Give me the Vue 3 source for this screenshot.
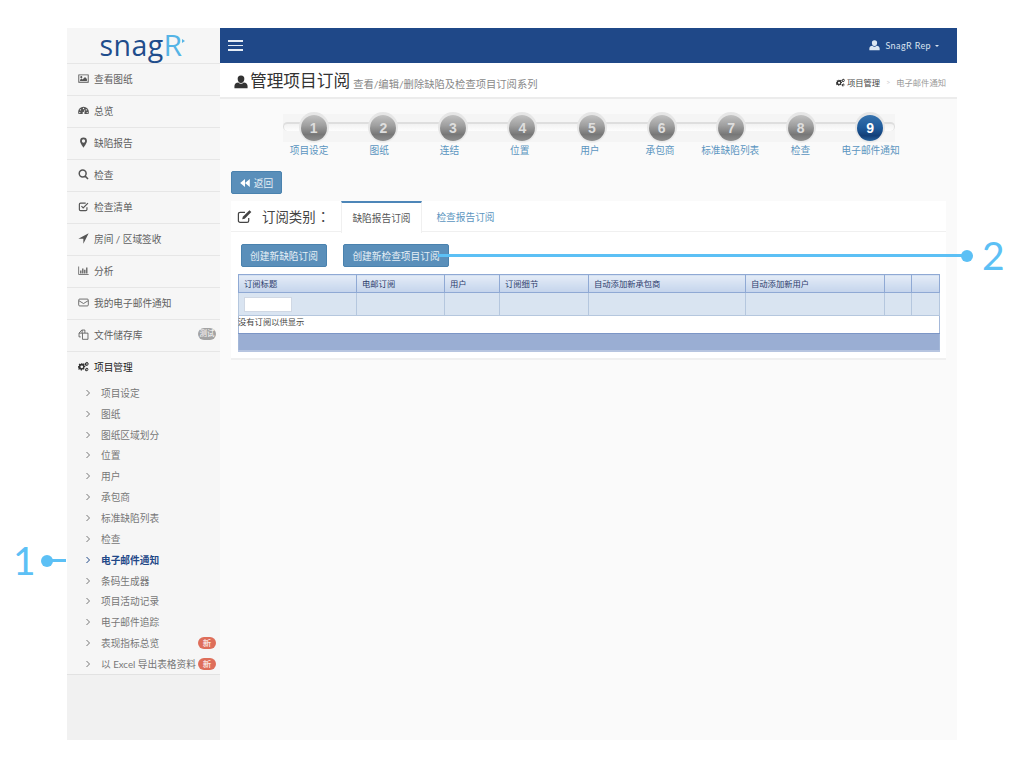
<script setup>
const icons = {
  picture: { f: 'M.5 2h15v12H.5zM1.800 3.300v9.400h12.400V3.300zM4.800 4.500a1.500 1.500 0 1 1 0 3 1.500 1.500 0 0 1 0-3zM3 11.500V9.800l2-1.800 1.600 1.300 3.600-3.600 2.800 3v2.800z' },
  gauge: { f: 'M8 2.500a7.800 7.800 0 0 0-7.800 7.800c0 1.100.2 2.100.6 2.900h14.400c.4-.8.600-1.800.6-2.900A7.800 7.800 0 0 0 8 2.500zM8 4a1 1 0 1 1 0 2 1 1 0 0 1 0-2zM3.600 6a1 1 0 1 1 0 2 1 1 0 0 1 0-2zM12.400 6a1 1 0 1 1 0 2 1 1 0 0 1 0-2zM2.600 10a1 1 0 1 1 0 2 1 1 0 0 1 0-2zM13.400 10a1 1 0 1 1 0 2 1 1 0 0 1 0-2zM10 6.500l.9.400-1.700 3.600a1.500 1.500 0 1 1-.9-.4z' },
  pin: { f: 'M8 .8a5 5 0 0 0-5 5c0 3.200 5 9.600 5 9.600s5-6.400 5-9.600a5 5 0 0 0-5-5zM8 3.400a2.400 2.400 0 1 1 0 4.800 2.400 2.400 0 0 1 0-4.800z' },
  search: { s: 'M6.800 1.500a5 5 0 1 0 0 10 5 5 0 0 0 0-10zM10.400 10.400l4.200 4.200', w: 2.200 },
  check: { s: 'M13 9v3.200a1.800 1.800 0 0 1-1.800 1.800H3.800A1.800 1.800 0 0 1 2 12.200V4.800A1.800 1.800 0 0 1 3.800 3h7.400M5 7.500l2.500 2.500L14.500 3', w: 1.700 },
  arrow: { f: 'M15.500 .5 .5 8.200h7.300v7.300z' },
  chart: { f: 'M.5 2h1.100v11.200h13.900v1.100H.5zM3.200 8h1.800v4.200H3.200zM6.100 5h1.800v7.200H6.100zM9 7h1.800v5.200H9zM11.900 3.500h1.800v8.700h-1.800z' },
  mail: { s: 'M2.500 3h11A1.500 1.500 0 0 1 15 4.500v7a1.500 1.500 0 0 1-1.500 1.500h-11A1.500 1.500 0 0 1 1 11.500v-7A1.500 1.500 0 0 1 2.500 3zM1.500 5.500 8 9.500l6.500-4', w: 1.200 },
  files: { s: 'M6.500 6h8v9h-8zM4 11.500H1.500V6l4-4.500h4.500V6M6 1.500V6H1.500', w: 1.200 },
  cogs: { f: 'M6 3.500 7.300 4l1-.7 1.300 1.300-.7 1 .5 1.300 1.200.2v1.800l-1.200.2-.5 1.300.7 1-1.300 1.300-1-.7-1.300.5-.2 1.200H4l-.2-1.200-1.300-.5-1 .7L.2 11.900l.7-1-.5-1.300L0 9.400V7.600l1.200-.2.5-1.300-.7-1L2.300 3.800l1 .7L4.600 4l.2-1.200zM5.500 6.500a2 2 0 1 0 0 4 2 2 0 0 0 0-4zM13 1l.5.900 1-.1.200 1 .9.500-.4.900.4.900-.9.500-.2 1-1-.1-.5.900-.8-.6-.9.300-.5-.9-1-.3.200-1-.5-.8.800-.6.100-1 1 .1.700-.7zM13 3.200a1.100 1.100 0 1 0 0 2.200 1.100 1.100 0 0 0 0-2.200zM13 9.500l.4.800.9-.1.100.9.800.4-.3.800.3.800-.8.400-.1.900-.9-.1-.4.800-.7-.5-.8.300-.4-.8-.9-.3.200-.9-.4-.7.700-.5.100-.9.900.1.600-.6zM13 11.600a1 1 0 1 0 0 2 1 1 0 0 0 0-2z' },
  user: { f: 'M8 .5a3.800 3.800 0 0 1 3.800 4C11.800 7 10.300 9 8 9S4.200 7 4.200 4.500A3.800 3.800 0 0 1 8 .5zM5 8.500C5.800 9.500 6.800 10 8 10s2.200-.5 3-1.500c2.800.3 4.500 1.700 4.500 4v2.500H.5v-2.500c0-2.300 1.700-3.700 4.500-4z' },
  edit: { s: 'M12.500 9.500v3a1.800 1.800 0 0 1-1.800 1.800H3.300a1.800 1.800 0 0 1-1.800-1.800V5.300a1.800 1.800 0 0 1 1.800-1.800h5.200', f: 'M13.300 1.200l2 2-7.100 7.100-2.700.7.700-2.700z' }
}

const mainMenu = [
  { icon: 'picture', label: '查看图纸' },
  { icon: 'gauge', label: '总览' },
  { icon: 'pin', label: '缺陷报告' },
  { icon: 'search', label: '检查' },
  { icon: 'check', label: '检查清单' },
  { icon: 'arrow', label: '房间 / 区域签收' },
  { icon: 'chart', label: '分析' },
  { icon: 'mail', label: '我的电子邮件通知' },
  { icon: 'files', label: '文件储存库', badge: '测试' }
]

const subMenu = [
  { label: '项目设定' },
  { label: '图纸' },
  { label: '图纸区域划分' },
  { label: '位置' },
  { label: '用户' },
  { label: '承包商' },
  { label: '标准缺陷列表' },
  { label: '检查' },
  { label: '电子邮件通知', active: true },
  { label: '条码生成器' },
  { label: '项目活动记录' },
  { label: '电子邮件追踪' },
  { label: '表现指标总览', badge: '新' },
  { label: '以 Excel 导出表格资料', badge: '新' }
]

const steps = ['项目设定', '图纸', '连结', '位置', '用户', '承包商', '标准缺陷列表', '检查', '电子邮件通知']

const columns = [
  { label: '订阅标题', width: 118 },
  { label: '电邮订阅', width: 88 },
  { label: '用户', width: 55 },
  { label: '订阅细节', width: 89 },
  { label: '自动添加新承包商', width: 157 },
  { label: '自动添加新用户', width: 139 },
  { label: '', width: 27 },
  { label: '', width: 28 }
]
</script>

<template>
  <div class="page">
    <div class="frame">
      <aside class="sidebar">
        <div class="logo"><span class="logo-a">snag</span><span class="logo-b">R</span><i class="logo-dot"></i></div>
        <ul class="menu">
          <li v-for="item in mainMenu" :key="item.label" class="menu-item">
            <svg class="menu-icon" viewBox="0 0 16 16">
              <path v-if="icons[item.icon].f" :d="icons[item.icon].f" fill="#555" fill-rule="evenodd" />
              <path v-if="icons[item.icon].s" :d="icons[item.icon].s" fill="none" stroke="#555" :stroke-width="icons[item.icon].w" />
            </svg>
            <span>{{ item.label }}</span>
            <em v-if="item.badge" class="badge gray">{{ item.badge }}</em>
          </li>
        </ul>
        <div class="group">
          <div class="group-title">
            <svg class="menu-icon" viewBox="0 0 16 16"><path :d="icons.cogs.f" fill="#333" fill-rule="evenodd" /></svg>
            <span>项目管理</span>
          </div>
          <ul class="sub">
            <li v-for="item in subMenu" :key="item.label" class="sub-item" :class="{ active: item.active }">
              <svg class="chev" viewBox="0 0 6 8"><path d="M1.500 1 4.500 4 1.500 7" fill="none" stroke="currentColor" stroke-width="1" /></svg>
              <span>{{ item.label }}</span>
              <em v-if="item.badge" class="badge red">{{ item.badge }}</em>
            </li>
          </ul>
        </div>
        <div class="side-foot"></div>
      </aside>

      <main class="main">
        <header class="topbar">
          <div class="burger"><i></i><i></i><i></i></div>
          <div class="account">
            <svg class="acc-icon" viewBox="0 0 16 16"><path :d="icons.user.f" fill="#dce6f2" /></svg>
            <span>SnagR Rep</span>
            <i class="caret"></i>
          </div>
        </header>

        <section class="head">
          <svg class="head-icon" viewBox="0 0 16 16"><path :d="icons.user.f" fill="#333" /></svg>
          <h1>管理项目订阅</h1>
          <small>查看/编辑/删除缺陷及检查项目订阅系列</small>
          <nav class="crumbs">
            <svg class="crumb-icon" viewBox="0 0 16 16"><path :d="icons.cogs.f" fill="#333" fill-rule="evenodd" /></svg>
            <b>项目管理</b>
            <span class="sep">&gt;</span>
            <span>电子邮件通知</span>
          </nav>
        </section>

        <section class="content">
          <div class="wizard">
            <div class="track">
              <div class="rail"></div>
              <div v-for="(s, i) in steps" :key="s" class="dot-cell">
                <div class="dot" :class="{ current: i === 8 }">{{ i + 1 }}</div>
              </div>
            </div>
            <div class="labels">
              <a v-for="s in steps" :key="s">{{ s }}</a>
            </div>
          </div>

          <button class="btn back" type="button">
            <svg viewBox="0 0 12 10" class="back-icon"><path d="M6 0v10L0 5zM12 0v10L6 5z" fill="#fff" /></svg>
            <span>返回</span>
          </button>

          <div class="card">
            <div class="tabs">
              <svg class="tab-icon" viewBox="0 0 16 16">
                <path :d="icons.edit.s" fill="none" stroke="#444" stroke-width="1.300" />
                <path :d="icons.edit.f" fill="#444" />
              </svg>
              <span class="tab-title">订阅类别<span class="colon">：</span></span>
              <a class="tab on">缺陷报告订阅</a>
              <a class="tab">检查报告订阅</a>
            </div>
            <div class="card-body">
              <div class="actions">
                <button class="btn" type="button">创建新缺陷订阅</button>
                <button class="btn" type="button">创建新检查项目订阅</button>
              </div>
              <table class="grid">
                <colgroup><col v-for="(c, i) in columns" :key="i" :style="{ width: c.width + 'px' }" /></colgroup>
                <thead>
                  <tr><th v-for="(c, i) in columns" :key="i">{{ c.label }}</th></tr>
                </thead>
                <tbody>
                  <tr class="filter">
                    <td v-for="(c, i) in columns" :key="i"><input v-if="i === 0" type="text" /></td>
                  </tr>
                  <tr class="empty"><td :colspan="columns.length"><span class="none">没有订阅以供显示</span></td></tr>
                  <tr class="pager"><td :colspan="columns.length"></td></tr>
                </tbody>
              </table>
            </div>
          </div>
        </section>
      </main>
    </div>

    <div class="callout one">
      <span class="num">1</span><i class="ball"></i><i class="line"></i>
    </div>
    <div class="callout two">
      <i class="line"></i><i class="ball"></i><span class="num">2</span>
    </div>
  </div>
</template>

<style>
html, body { margin: 0; background: #fff; }
</style>

<style scoped>
* { box-sizing: border-box; }
.page {
  position: relative;
  width: 1024px;
  height: 768px;
  padding: 28px 67px;
  overflow: hidden;
  background: #fff;
  font-family: "Lato", "Noto Sans CJK SC", sans-serif;
  font-size: 9.700px;
  color: #5f5f5f;
}
.frame { display: flex; height: 712px; }
ul { list-style: none; margin: 0; padding: 0; }

.sidebar { width: 153px; display: flex; flex-direction: column; background: #f6f6f6; }
.logo {
  position: relative;
  height: 35px;
  display: flex;
  align-items: baseline;
  justify-content: center;
  padding: 2px 5px 0 0;
  font-family: "Open Sans", sans-serif;
  font-size: 28.500px;
  line-height: 1;
  letter-spacing: 0.400px;
}
.logo-a { color: #1f4d8c; }
.logo-b { color: #55b4e6; font-size: 30px; }
.logo-dot {
  position: absolute;
  left: 115px;
  top: 11px;
  width: 0;
  height: 0;
  border-left: 3px solid #55b4e6;
  border-top: 2px solid transparent;
  border-bottom: 2px solid transparent;
}
.menu-item, .group-title {
  height: 32px;
  display: flex;
  align-items: center;
  padding: 0 4px 2px 11px;
  border-top: 1px solid #e6e6e6;
}
.menu-icon { width: 11px; height: 11px; margin-right: 5px; flex: none; }
.menu-item .badge { margin-left: auto; position: relative; top: -1px; }
.group-title { color: #222; }
.sub { margin-top: -0.500px; }
.sub-item {
  height: 20.850px;
  display: flex;
  align-items: center;
  padding: 0 4px 0 18px;
  color: #777;
}
.sub-item.active { color: #1f4888; font-weight: 700; }
.chev { width: 6px; height: 8px; margin-right: 10px; flex: none; color: #777; }
.sub-item.active .chev { color: #1f4888; }
.sub-item .badge { margin-left: auto; }
.badge {
  width: 18px;
  height: 12px;
  border-radius: 6px;
  font-style: normal;
  font-size: 7.500px;
  line-height: 12px;
  text-align: center;
  color: #fff;
}
.badge.gray { background: #a3a3a3; }
.badge.red { background: #de6e5a; font-size: 8.500px; }
.side-foot { flex: 1; border-top: 1px solid #e2e2e2; background: #f1f1f1; }

.main { flex: 1; display: flex; flex-direction: column; background: #fafafa; min-width: 0; }
.topbar {
  height: 35px;
  flex: none;
  background: #1f4888;
  display: flex;
  align-items: center;
  justify-content: space-between;
  padding: 0 18px 0 8px;
}
.burger { width: 15px; display: flex; flex-direction: column; gap: 3px; }
.burger i { height: 1.500px; background: #e6edf5; }
.account {
  display: flex;
  align-items: center;
  color: #d9e3f0;
  font-size: 9px;
  letter-spacing: 0.400px;
}
.acc-icon { width: 11px; height: 11px; margin-right: 5px; }
.caret {
  margin-left: 4px;
  width: 0;
  height: 0;
  border-top: 2.500px solid #d9e3f0;
  border-left: 2.500px solid transparent;
  border-right: 2.500px solid transparent;
}

.head {
  height: 36px;
  flex: none;
  display: flex;
  align-items: center;
  padding: 3px 11px 0 14px;
  background: #fff;
  border-bottom: 2px solid #ececec;
}
.head-icon { width: 14px; height: 14px; margin-right: 2px; flex: none; }
h1 { margin: 0; font-size: 16.700px; font-weight: 400; color: #333; line-height: 1; white-space: nowrap; }
small { margin: 3px 0 0 3px; font-size: 10.300px; color: #888; white-space: nowrap; }
.crumbs {
  margin-left: auto;
  margin-top: 1px;
  display: flex;
  align-items: center;
  font-size: 8.300px;
  color: #999;
}
.crumbs b { font-weight: 400; color: #444; }
.crumb-icon { width: 9px; height: 9px; margin-right: 2px; }
.sep { margin: 0 6px; color: #ccc; font-size: 7px; }

.content { padding: 13px 11px 0 11px; }
.wizard { padding-left: 48px; width: 680px; }
.track {
  position: relative;
  width: 626px;
  height: 32px;
  display: grid;
  grid-template-columns: repeat(9, 1fr);
  align-items: center;
  background: linear-gradient(#f5f5f5, #f5f5f5) no-repeat 4px 2px / 612px 28px;
}
.rail {
  position: absolute;
  left: 4px;
  width: 612px;
  top: 10px;
  height: 9px;
  border-top: 2px solid #dedede;
  border-left: 1px solid #dedede;
  border-right: 1px solid #dedede;
  border-radius: 5px;
  background: linear-gradient(#f2f2f2, #fdfdfd);
}
.dot-cell { position: relative; display: flex; justify-content: center; }
.dot {
  width: 26px;
  height: 26px;
  border-radius: 50%;
  display: flex;
  align-items: center;
  justify-content: center;
  font-family: "Liberation Sans", sans-serif;
  font-size: 14px;
  font-weight: 700;
  color: #dedede;
  background: linear-gradient(#c2c2c2, #a0a0a0 40%, #777 75%, #8f8f8f);
  box-shadow: 0 -1px 0 2px #e6e6e6, 0 1px 0 1px #efefef;
}
.dot.current {
  color: #fff;
  background: linear-gradient(#3672ad, #1f5a9a 50%, #123f78 80%, #2a659f);
}
.labels {
  width: 632px;
  margin-left: -5px;
  margin-top: -1px;
  display: grid;
  grid-template-columns: repeat(9, 70.200px);
  text-align: center;
  line-height: 15px;
  color: #5b95c0;
}
.labels a { white-space: nowrap; }

.btn {
  border: 1px solid #4a82ae;
  border-radius: 2px;
  background: #5a8fba;
  color: #e7eff6;
  font: inherit;
  height: 23px;
  padding: 0 8px;
  white-space: nowrap;
}
.back {
  display: flex;
  align-items: center;
  justify-content: center;
  gap: 4px;
  margin-top: 13px;
  width: 51px;
  padding: 0;
}
.back-icon { width: 10px; height: 8px; }
.card {
  margin-top: 7px;
  background: #fff;
  border-bottom: 2px solid #f0f0f0;
  height: 159px;
}
.tabs {
  height: 31px;
  display: flex;
  align-items: center;
  padding-left: 6px;
  border-bottom: 1px solid #f0f0f0;
}
.tab-icon { width: 15px; height: 15px; flex: none; }
.tab-title { margin-left: 10px; width: 79px; font-size: 13.400px; color: #444; white-space: nowrap; }
.colon { font-family: "Noto Sans CJK TC", sans-serif; margin-left: 1px; }
.tab {
  height: 31px;
  width: 81px;
  display: flex;
  align-items: center;
  justify-content: center;
  color: #5b95c0;
  position: relative;
}
.tab.on {
  color: #555;
  background: #fff;
  border-top: 2px solid #4d86b8;
  border-left: 1px solid #f0f0f0;
  border-right: 1px solid #f0f0f0;
  height: 32px;
  margin-bottom: -1px;
}
.tab:last-child { margin-left: 3px; top: 1px; }
.card-body { padding: 12px 6px 0 7px; }
.actions { display: flex; gap: 16px; padding-left: 3px; }
.actions .btn:first-child { width: 86px; padding: 0; }
.actions .btn:last-child { width: 106px; padding: 0; }
.grid {
  margin-top: 7px;
  width: 701px;
  table-layout: fixed;
  border-collapse: collapse;
  border: 1px solid #a4b8d9;
  font-size: 8.300px;
}
.grid th {
  height: 18px;
  padding: 0 0 1px 5px;
  text-align: left;
  font-weight: 400;
  color: #2d3c6c;
  border: 1px solid #8fa9d4;
  background: linear-gradient(#e4ecf7, #c4d4ec);
}
.filter td {
  height: 23px;
  padding: 0 0 0 5px;
  background: #d9e4f1;
  border: 1px solid #b5c7de;
}
.filter input {
  display: block;
  width: 48px;
  height: 15px;
  padding: 0;
  border: 1px solid #d0d8e4;
  background: #fff;
}
.empty td {
  height: 18px;
  padding: 1px 0 0;
  vertical-align: top;
  line-height: 11px;
  color: #444;
  background: #fff;
}
.none { margin-left: -1px; }
.pager td {
  height: 17px;
  padding: 0;
  background: #9aaed3;
  border-top: 1px solid #7c96c6;
  border-bottom: 2px solid #b7c5e0;
}

.callout { position: absolute; display: flex; align-items: center; color: #5cc0f5; }
.callout .num {
  font-family: "Lato", sans-serif;
  font-weight: 400;
  font-size: 39px;
  line-height: 1;
}
.callout .ball { width: 12px; height: 12px; border-radius: 50%; background: #5cc0f5; flex: none; }
.callout .line { height: 3px; background: #5cc0f5; }
.one { left: 13px; top: 541px; }
.one .num { width: 28px; }
.one .line { width: 14px; margin-left: -1px; }
.two { left: 438px; top: 236px; }
.two .line { width: 524px; margin-right: -1px; }
.two .num { margin-left: 9px; }
</style>
